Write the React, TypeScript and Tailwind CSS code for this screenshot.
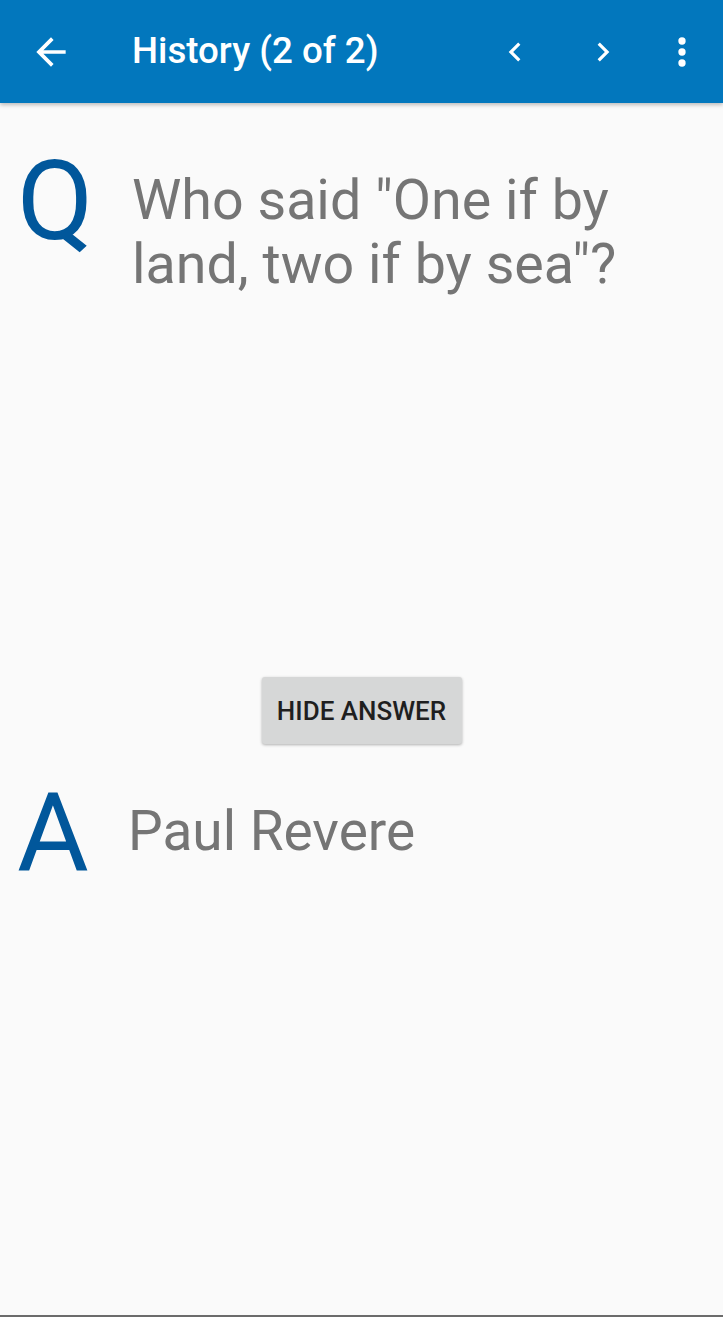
export default function App() {
  return (
    <div
      className="flex flex-col h-[1317px] bg-[#fafafa] overflow-hidden"
      style={{ fontFamily: "Roboto, 'Noto Sans', sans-serif" }}
    >
      <div className="relative z-10 flex items-center h-[103px] bg-[#0277bd] shadow-[0_2px_4px_rgba(0,0,0,0.25)] text-white">
        <button className="ml-[29px] w-[44px] h-[44px] flex items-center justify-center">
          <svg width="44" height="44" viewBox="0 0 24 24" fill="currentColor">
            <path d="M20 11H7.83l5.59-5.59L12 4l-8 8 8 8 1.41-1.41L7.83 13H20v-2z" />
          </svg>
        </button>
        <div className="ml-[59px] text-[36.7px] font-medium leading-none">History (2 of 2)</div>
        <div className="flex-1" />
        <button className="w-[38px] h-[38px] mr-[50px] flex items-center justify-center">
          <svg width="38" height="38" viewBox="0 0 24 24" fill="currentColor">
            <path d="M15.41 7.41L14 6l-6 6 6 6 1.41-1.41L10.83 12z" />
          </svg>
        </button>
        <button className="w-[38px] h-[38px] mr-[38px] flex items-center justify-center">
          <svg width="38" height="38" viewBox="0 0 24 24" fill="currentColor">
            <path d="M10 6L8.59 7.41 13.17 12l-4.58 4.59L10 18l6-6z" />
          </svg>
        </button>
        <button className="w-[44px] h-[44px] mr-[19px] flex items-center justify-center">
          <svg width="44" height="44" viewBox="0 0 24 24" fill="currentColor">
            <circle cx="12" cy="6" r="2" />
            <circle cx="12" cy="12" r="2" />
            <circle cx="12" cy="18" r="2" />
          </svg>
        </button>
      </div>

      {/* question */}
      <div className="flex items-start pl-[17px] pt-[43px]">
        <span className="w-[115px] shrink-0 text-[111px] leading-none text-[#01579b]">Q</span>
        <p className="mt-[22px] pr-[10px] text-[55.6px] leading-[64px] text-[#757575]">
          Who said "One if by land, two if by sea"?
        </p>
      </div>

      <div className="flex justify-center mt-[381px]">
        <button className="w-[200px] h-[67px] rounded-[3px] bg-[#d6d7d7] shadow-[0_1px_3px_rgba(0,0,0,0.3)] text-[26px] font-medium text-[#1f1f1f] leading-none">
          HIDE ANSWER
        </button>
      </div>

      {/* answer */}
      <div className="flex items-start pl-[17px] mt-[34px]">
        <span className="w-[111px] shrink-0 text-[110px] leading-none text-[#01579b]">A</span>
        <p className="mt-[21px] text-[55px] leading-[64px] text-[#757575]">Paul Revere</p>
      </div>

      <div className="flex-1" />
      <div className="h-[2px] bg-[#6b6b6b]" />
    </div>
  )
}
